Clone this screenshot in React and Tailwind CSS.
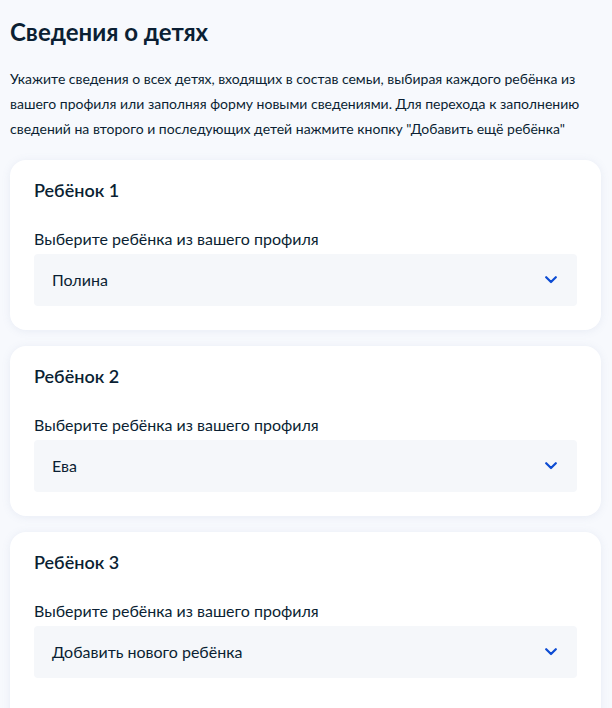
const children = [
  { title: 'Ребёнок 1', value: 'Полина' },
  { title: 'Ребёнок 2', value: 'Ева' },
  { title: 'Ребёнок 3', value: 'Добавить нового ребёнка', isNew: true },
];

const Chevron = () => (
  <svg width="12" height="8" viewBox="0 0 12 8" fill="none">
    <path d="M1.2 1.2L6 6L10.8 1.2" stroke="#0d4cd3" strokeWidth="2.2" strokeLinecap="round" strokeLinejoin="round" />
  </svg>
);

const ChildCard = ({ title, value, isNew }) => (
  <div className="bg-white rounded-2xl shadow-[0_1px_8px_rgba(120,140,180,0.12)] px-6 pt-[18px] pb-6">
    <h3 className="text-[18px] leading-[24px] font-semibold text-[#0b1f33]">{title}</h3>
    <div className="mt-[25px] text-[16px] leading-[24px] text-[#0b1f33]">Выберите ребёнка из вашего профиля</div>
    <div className="mt-[3px] h-[52px] bg-[#f5f7fa] rounded-[4px] flex items-center justify-between pl-[18px] pr-[20px]">
      <span className="text-[16px] text-[#0b1f33]">{value}</span>
      <Chevron />
    </div>
    {isNew && (
      <>
        <div className="mt-[24px] text-[16px] leading-[24px] text-[#0b1f33]">Фамилия</div>
        <div className="mt-[3px] h-[52px] bg-[#f5f7fa] rounded-[4px]"></div>
      </>
    )}
  </div>
);

export default function App() {
  return (
    <div className="min-h-screen bg-[#f7f9fd] px-[10px] pt-[16px] pb-10 font-['Lato','Noto_Sans',sans-serif]">
      <h1 className="text-[24px] leading-[32px] font-bold text-[#0b1f33]">Сведения о детях</h1>
      <p className="mt-[18px] text-[14px] leading-[25px] text-[#0b1f33]">
        Укажите сведения о всех детях, входящих в состав семьи, выбирая каждого ребёнка из вашего профиля или заполняя форму новыми сведениями. Для перехода к заполнению сведений на второго и последующих детей нажмите кнопку "Добавить ещё ребёнка"
      </p>
      <div className="mt-[19px] flex flex-col gap-4 w-[591px]">
        {children.map((c) => (
          <ChildCard key={c.title} {...c} />
        ))}
      </div>
    </div>
  );
}
